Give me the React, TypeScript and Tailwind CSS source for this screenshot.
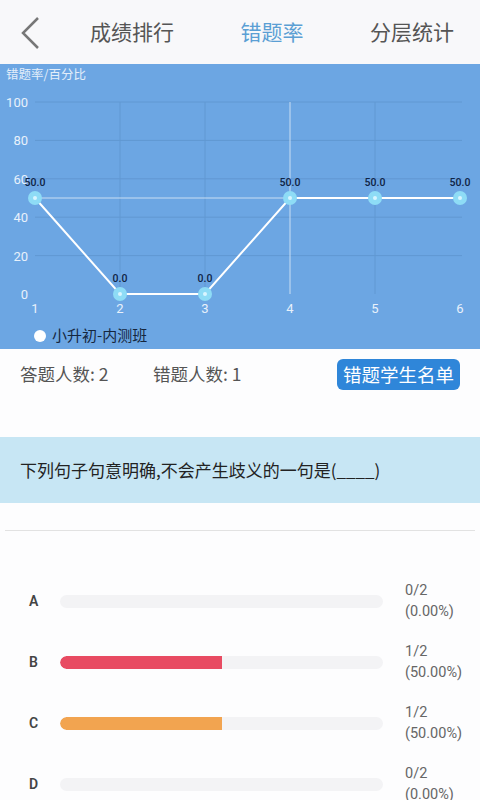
import React from "react";

const pts = [
  { x: 35, v: 50 },
  { x: 120, v: 0 },
  { x: 205, v: 0 },
  { x: 290, v: 50 },
  { x: 375, v: 50 },
  { x: 460, v: 50 },
];
const Y = (v: number) => 230 - v * 1.92;

function Chart() {
  const poly = pts.map((p) => `${p.x},${Y(p.v)}`).join(" ");
  return (
    <svg width="480" height="285" viewBox="0 0 480 285" className="block">
      <text x="6" y="15" fontSize="12.5" fill="#e3eefa" fontFamily="'Noto Sans CJK SC', sans-serif">错题率/百分比</text>
      {[20, 40, 60, 80, 100].map((v) => (
        <line key={v} x1="35" x2="462" y1={Y(v)} y2={Y(v)} stroke="#6198d2" strokeWidth="1" />
      ))}
      {[120, 205, 375].map((x) => (
        <line key={x} x1={x} x2={x} y1={Y(100)} y2={Y(0)} stroke="#6198d2" strokeWidth="1" />
      ))}
      <line x1="290" x2="290" y1={Y(100)} y2={Y(0)} stroke="#c9def3" strokeWidth="1" />
      <line x1="35" x2="462" y1={Y(50)} y2={Y(50)} stroke="#c9def3" strokeWidth="1" />
      {[0, 20, 40, 60, 80, 100].map((v) => (
        <text key={v} x="28" y={Y(v) + 5} fontSize="13" textAnchor="end" fill="#e8f1fb" fontFamily="Roboto, sans-serif">{v}</text>
      ))}
      {pts.map((p, i) => (
        <text key={i} x={p.x} y="249" fontSize="13" textAnchor="middle" fill="#e8f1fb" fontFamily="Roboto, sans-serif">{i + 1}</text>
      ))}
      <polyline points={poly} fill="none" stroke="#ffffff" strokeWidth="2" />
      {pts.map((p, i) => (
        <g key={i}>
          <circle cx={p.x} cy={Y(p.v)} r="7" fill="#8edcf6" />
          <circle cx={p.x} cy={Y(p.v)} r="2" fill="#d9f5ff" />
          <text x={p.x} y={Y(p.v) - 12} fontSize="10.5" fontWeight="500" textAnchor="middle" fill="#0f2445" fontFamily="Roboto, sans-serif">{p.v.toFixed(1)}</text>
        </g>
      ))}
      <circle cx="40" cy="272" r="6" fill="#ffffff" />
      <text x="52" y="277" fontSize="15" fill="#15263e" fontFamily="'Noto Sans CJK SC', sans-serif">小升初-内测班</text>
    </svg>
  );
}

const opts = [
  { k: "A", n: 0, c: "" },
  { k: "B", n: 1, c: "bg-[#e84b62]" },
  { k: "C", n: 1, c: "bg-[#f2a450]" },
  { k: "D", n: 0, c: "" },
];

export default function App() {
  return (
    <div className="w-[480px] h-[800px] overflow-hidden bg-[#fdfdfe]" style={{ fontFamily: "'Noto Sans CJK SC', sans-serif" }}>
      <div className="h-[64px] bg-[#f8f8fa] flex items-center relative">
        <svg width="24" height="34" viewBox="0 0 24 34" className="absolute left-[19px] top-[16px]">
          <polyline points="19,2 4,17 19,32" fill="none" stroke="#777" strokeWidth="2.5" />
        </svg>
        <div className="flex-1 flex items-center pl-[90px] pr-[26px] justify-between text-[21px] text-[#555]">
          <span>成绩排行</span>
          <span className="text-[#5b9fd4]">错题率</span>
          <span>分层统计</span>
        </div>
      </div>
      <div className="bg-[#6ca6e3] h-[285px]">
        <Chart />
      </div>
      <div className="h-[51px] flex items-center pl-[20px] pr-[20px] text-[17.5px] text-[#555]">
        <span className="w-[133px]">答题人数: 2</span>
        <span>错题人数: 1</span>
        <span className="ml-auto h-[31px] px-[6px] rounded-[6px] bg-[#2f86d9] text-white text-[18.5px] flex items-center">错题学生名单</span>
      </div>
      <div className="h-[37px]" />
      <div className="h-[66px] bg-[#c7e6f4] flex items-center pl-[20px] text-[17px] text-[#222]">
        下列句子句意明确,不会产生歧义的一句是(____)
      </div>
      <div className="h-[27px]" />
      <div className="mx-[5px] h-[1px] bg-[#e2e2e2]" />
      <div className="pt-[52px] flex flex-col gap-[25px]">
        {opts.map((o) => (
          <div key={o.k} className="flex items-center h-[36px]">
            <span className="w-[60px] pl-[29px] text-[14px] font-semibold text-[#444]" style={{ fontFamily: "Roboto, sans-serif" }}>{o.k}</span>
            <div className="w-[323px] h-[13px] rounded-full bg-[#f3f3f5] overflow-hidden">
              {o.n > 0 && <div className={`h-full w-1/2 rounded-l-full ${o.c}`} />}
            </div>
            <div className="ml-[22px] text-[14.5px] leading-[21px] text-[#666]" style={{ fontFamily: "Roboto, sans-serif" }}>
              <div>{o.n}/2</div>
              <div>({o.n === 0 ? "0.00" : "50.00"}%)</div>
            </div>
          </div>
        ))}
      </div>
    </div>
  );
}
